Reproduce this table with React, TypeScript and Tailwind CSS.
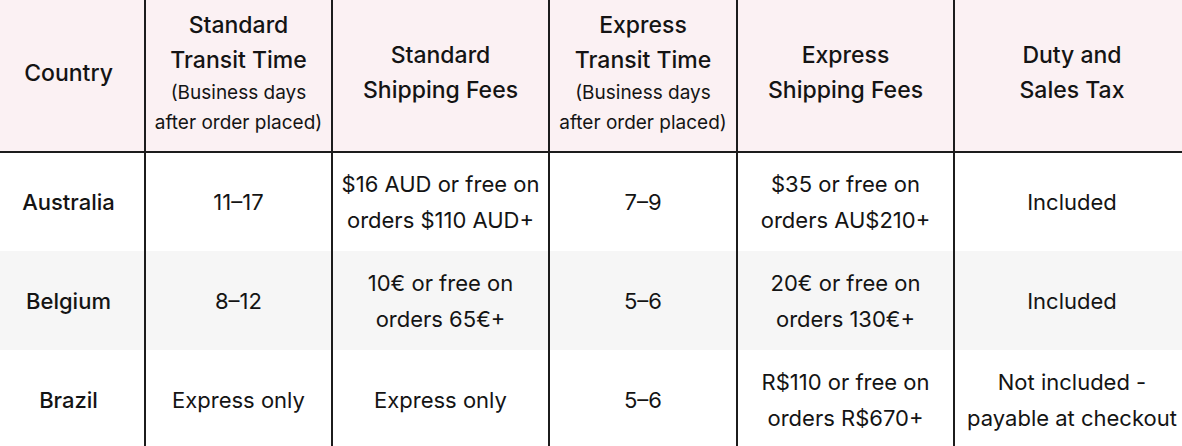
import React from 'react';

type Row = {
  country: string;
  stdTime: string;
  stdFee: string[];
  expTime: string;
  expFee: string[];
  duty: string[];
};

const rows: Row[] = [
  {
    country: 'Australia',
    stdTime: '11–17',
    stdFee: ['$16 AUD or free on', 'orders $110 AUD+'],
    expTime: '7–9',
    expFee: ['$35 or free on', 'orders AU$210+'],
    duty: ['Included'],
  },
  {
    country: 'Belgium',
    stdTime: '8–12',
    stdFee: ['10€ or free on', 'orders 65€+'],
    expTime: '5–6',
    expFee: ['20€ or free on', 'orders 130€+'],
    duty: ['Included'],
  },
  {
    country: 'Brazil',
    stdTime: 'Express only',
    stdFee: ['Express only'],
    expTime: '5–6',
    expFee: ['R$110 or free on', 'orders R$670+'],
    duty: ['Not included -', 'payable at checkout'],
  },
];

const Lines = ({ lines }: { lines: string[] }) => (
  <>
    {lines.map((l) => (
      <div key={l}>{l}</div>
    ))}
  </>
);

const HeadTitle = ({ title, note }: { title: string[]; note?: boolean }) => (
  <div className="flex flex-col items-center pb-[5px]">
    <div className="text-[23px] leading-[35px] font-medium">
      <Lines lines={title} />
    </div>
    {note && (
      <div className="text-[19px] leading-[30px] font-normal">
        <div>(Business days</div>
        <div>after order placed)</div>
      </div>
    )}
  </div>
);

const cell = 'border-x-2 border-[#1c1c1c] text-center align-middle px-1';

export default function App() {
  return (
    <div
      className="w-[1182px] h-[446px] overflow-hidden bg-white text-[#141414]"
      style={{ fontFamily: 'Inter, "Noto Sans", sans-serif' }}
    >
      <table className="ml-[-9px] w-[1198px] table-fixed border-collapse">
        <colgroup>
          <col className="w-[153px]" />
          <col className="w-[187px]" />
          <col className="w-[217px]" />
          <col className="w-[188px]" />
          <col className="w-[217px]" />
          <col className="w-[236px]" />
        </colgroup>
        <thead>
          <tr className="h-[152px] bg-[#fbf1f3] border-b-2 border-[#1c1c1c]">
            <th className={cell}>
              <HeadTitle title={['Country']} />
            </th>
            <th className={cell}>
              <HeadTitle title={['Standard', 'Transit Time']} note />
            </th>
            <th className={cell}>
              <HeadTitle title={['Standard', 'Shipping Fees']} />
            </th>
            <th className={cell}>
              <HeadTitle title={['Express', 'Transit Time']} note />
            </th>
            <th className={cell}>
              <HeadTitle title={['Express', 'Shipping Fees']} />
            </th>
            <th className={cell}>
              <HeadTitle title={['Duty and', 'Sales Tax']} />
            </th>
          </tr>
        </thead>
        <tbody className="text-[22px] leading-[36px]">
          {rows.map((r, i) => (
            <tr key={r.country} className={`h-[99px] ${i === 1 ? 'bg-[#f6f6f6]' : 'bg-white'}`}>
              <td className={`${cell} font-medium`}>{r.country}</td>
              <td className={cell}>{r.stdTime}</td>
              <td className={cell}>
                <Lines lines={r.stdFee} />
              </td>
              <td className={cell}>{r.expTime}</td>
              <td className={cell}>
                <Lines lines={r.expFee} />
              </td>
              <td className={cell}>
                <Lines lines={r.duty} />
              </td>
            </tr>
          ))}
        </tbody>
      </table>
    </div>
  );
}
